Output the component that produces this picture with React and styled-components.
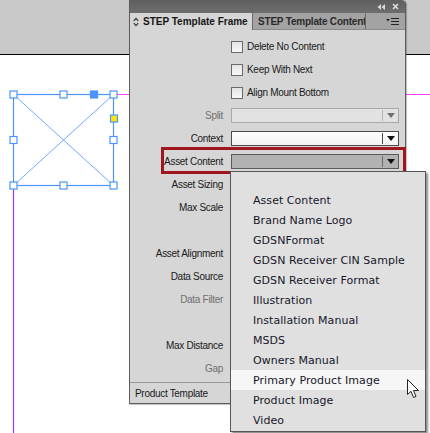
import styled, { createGlobalStyle } from "styled-components";

const GlobalStyle = createGlobalStyle`
  html, body {
    margin: 0;
    padding: 0;
    overflow: hidden;
  }
  #root {
    width: 430px;
    height: 433px;
  }
`;

const Screen = styled.div`
  position: relative;
  width: 430px;
  height: 433px;
  overflow: hidden;
  font-family: "Liberation Sans", Arial, sans-serif;
`;

const Canvas = styled.div`
  display: flex;
  flex-direction: column;
  width: 100%;
  height: 100%;
`;

const Pasteboard = styled.div`
  height: 54px;
  background: #c8c8c8;
  border-bottom: 1px solid #000;
`;

const Page = styled.div`
  flex: 1;
  background: #fff;
`;

const Guides = styled.svg`
  position: absolute;
  left: 0;
  top: 0;
`;

const Panel = styled.div`
  position: absolute;
  left: 129px;
  top: 0;
  width: 277px;
  height: 404px;
  box-sizing: border-box;
  border: 1px solid #5c5c5c;
  border-top: none;
  border-top-right-radius: 4px;
  background: #d6d6d6;
  display: flex;
  flex-direction: column;
  box-shadow: 1px 1px 1px rgba(0, 0, 0, 0.25);
`;

const Header = styled.div`
  height: 13px;
  background: linear-gradient(#5e5e5e, #6e6e6e);
  border-top-right-radius: 4px;
  display: flex;
  justify-content: flex-end;
  align-items: center;
  gap: 7px;
  padding-right: 6px;
`;

const Tabs = styled.div`
  height: 17px;
  display: flex;
  background: #a3a3a3;
  border-bottom: 1px solid #8a8a8a;
  box-sizing: border-box;
`;

const Tab = styled.div`
  width: ${(p) => p.$w}px;
  flex-shrink: 0;
  box-sizing: border-box;
  display: flex;
  align-items: center;
  gap: 4px;
  padding-left: ${(p) => (p.$active ? 3 : 5)}px;
  background: ${(p) => (p.$active ? "#d6d6d6" : "#a3a3a3")};
  border-right: 1px solid #6a6a6a;
  margin-bottom: ${(p) => (p.$active ? "-1px" : "0")};
  font-size: 10px;
  font-weight: bold;
  color: ${(p) => (p.$active ? "#151515" : "#2a2a2a")};
  white-space: nowrap;
  overflow: hidden;
  letter-spacing: ${(p) => (p.$active ? "0" : "-0.2px")};
  svg {
    flex-shrink: 0;
  }
`;

const TabMenu = styled.div`
  flex: 1;
  display: flex;
  justify-content: flex-end;
  align-items: center;
  padding-right: 6px;
`;

const Body = styled.div`
  flex: 1;
  padding-top: 5px;
  display: flex;
  flex-direction: column;
`;

const Row = styled.div`
  position: relative;
  height: 23px;
  display: grid;
  grid-template-columns: 93px 168px;
  column-gap: 8px;
  align-items: center;
  ${(p) =>
    p.$marked &&
    `
    &::after {
      content: "";
      position: absolute;
      left: 31px;
      right: -1px;
      top: -3px;
      height: 27px;
      box-sizing: border-box;
      border: 3px solid #a0161f;
    }
  `}
`;

const Label = styled.div`
  text-align: right;
  font-size: 10px;
  letter-spacing: -0.3px;
  color: ${(p) => (p.$dim ? "#6f6f6f" : "#1a1a1a")};
  white-space: nowrap;
`;

const CheckRow = styled.label`
  display: flex;
  align-items: center;
  gap: 4px;
  font-size: 10px;
  letter-spacing: -0.3px;
  color: #1a1a1a;
`;

const Box = styled.span`
  width: 12px;
  height: 12px;
  box-sizing: border-box;
  border: 1px solid #6a6a6a;
  background: linear-gradient(#e4e4e4, #f8f8f8);
`;

const selectLook = {
  disabled: { bg: "#e2e2e2", border: "#a8a8a8", arrow: "#707070", sep: "#b4b4b4" },
  normal: { bg: "linear-gradient(#ffffff, #f2f2f2)", border: "#4a4a4a", arrow: "#111", sep: "#4a4a4a" },
  active: { bg: "#b2b2b2", border: "#5a5a5a", arrow: "#111", sep: "#6a6a6a" },
};

const Select = styled.div`
  height: 15px;
  box-sizing: border-box;
  border: 1px solid ${(p) => selectLook[p.$look].border};
  background: ${(p) => selectLook[p.$look].bg};
  display: flex;
  justify-content: flex-end;
`;

const Arrow = styled.div`
  width: 15px;
  border-left: 1px solid ${(p) => selectLook[p.$look].sep};
  display: flex;
  align-items: center;
  justify-content: center;
  margin: 1px 0;
  &::before {
    content: "";
    border-left: 4px solid transparent;
    border-right: 4px solid transparent;
    border-top: 5px solid ${(p) => selectLook[p.$look].arrow};
  }
`;

const Footer = styled.div`
  height: 21px;
  box-sizing: border-box;
  margin-top: 2px;
  border-top: 1px solid #9a9a9a;
  display: flex;
  align-items: center;
  padding-left: 5px;
  font-size: 10px;
  letter-spacing: -0.3px;
  color: #1a1a1a;
`;

const Menu = styled.ul`
  position: absolute;
  left: 230px;
  top: 171px;
  width: 196px;
  height: 261px;
  box-sizing: border-box;
  margin: 0;
  padding: 18px 0 0;
  list-style: none;
  background: #e0e0e0;
  border: 1px solid #555;
  box-shadow: 2px 2px 2px rgba(0, 0, 0, 0.45);
`;

const Item = styled.li`
  height: 20px;
  display: flex;
  align-items: center;
  padding-left: 22px;
  font-family: "DejaVu Sans", Verdana, sans-serif;
  font-size: 11px;
  letter-spacing: 0.05px;
  color: #17172a;
  background: ${(p) => (p.$hover ? "#f6f6f6" : "transparent")};
`;

const Cursor = styled.svg`
  position: absolute;
  left: 407px;
  top: 379px;
`;

const Handle = ({ x, y, fill = "#fff", stroke = "#4d94ff" }) => (
  <rect x={x - 3.5} y={y - 3.5} width="7" height="7" fill={fill} stroke={stroke} strokeWidth="1.2" />
);

const rows = [
  { check: "Delete No Content" },
  { check: "Keep With Next" },
  { check: "Align Mount Bottom" },
  { label: "Split", dim: true, select: "disabled" },
  { label: "Context", select: "normal" },
  { label: "Asset Content", select: "active", marked: true },
  { label: "Asset Sizing" },
  { label: "Max Scale" },
  { label: "" },
  { label: "Asset Alignment" },
  { label: "Data Source" },
  { label: "Data Filter", dim: true },
  { label: "" },
  { label: "Max Distance" },
  { label: "Gap", dim: true },
];

const items = [
  "Asset Content",
  "Brand Name Logo",
  "GDSNFormat",
  "GDSN Receiver CIN Sample",
  "GDSN Receiver Format",
  "Illustration",
  "Installation Manual",
  "MSDS",
  "Owners Manual",
  "Primary Product Image",
  "Product Image",
  "Video",
];

export default function App() {
  return (
    <Screen>
      <GlobalStyle />
      <Canvas>
        <Pasteboard />
        <Page />
      </Canvas>
      <Guides width="430" height="433">
        <line x1="116" y1="94.5" x2="430" y2="94.5" stroke="#ff40ff" strokeWidth="1" />
        <line x1="13.5" y1="188" x2="13.5" y2="433" stroke="#9a3ee6" strokeWidth="1.2" />
        <rect x="13.5" y="94.5" width="100" height="91" fill="none" stroke="#4d94ff" strokeWidth="1.2" />
        <line x1="13.5" y1="94.5" x2="113.5" y2="185.5" stroke="#4d94ff" strokeWidth="0.8" />
        <line x1="113.5" y1="94.5" x2="13.5" y2="185.5" stroke="#4d94ff" strokeWidth="0.8" />
        <Handle x={13.5} y={94.5} />
        <Handle x={63.5} y={94.5} />
        <Handle x={113.5} y={94.5} />
        <Handle x={94} y={94.5} fill="#4d94ff" />
        <Handle x={13.5} y={140} />
        <Handle x={113.5} y={140} />
        <Handle x={13.5} y={185.5} />
        <Handle x={63.5} y={185.5} />
        <Handle x={113.5} y={185.5} />
        <Handle x={114} y={118.5} fill="#ffe600" />
      </Guides>

      <Panel>
        <Header>
          <svg width="8" height="6" viewBox="0 0 8 6">
            <path d="M4 0 L0.5 3 L4 6 Z M8 0 L4.5 3 L8 6 Z" fill="#d8d8d8" />
          </svg>
          <svg width="7" height="7" viewBox="0 0 7 7">
            <path d="M1 1 L6 6 M6 1 L1 6" stroke="#dedede" strokeWidth="1.6" />
          </svg>
        </Header>
        <Tabs>
          <Tab $active $w={123}>
            <svg width="6" height="10" viewBox="0 0 6 10">
              <path d="M0.8 3.8 L3 1.4 L5.2 3.8 M0.8 6.2 L3 8.6 L5.2 6.2" fill="none" stroke="#333" strokeWidth="1.2" />
            </svg>
            STEP Template Frame
          </Tab>
          <Tab $w={113}>STEP Template Content</Tab>
          <TabMenu>
            <svg width="13" height="9" viewBox="0 0 13 9">
              <path d="M0 2 L4 2 L2 4.5 Z" fill="#222" />
              <path d="M5 1.5 H13 M5 4.5 H13 M5 7.5 H13" stroke="#222" strokeWidth="1.2" />
            </svg>
          </TabMenu>
        </Tabs>
        <Body>
          {rows.map((r, i) =>
            r.check ? (
              <Row key={i}>
                <span />
                <CheckRow>
                  <Box />
                  {r.check}
                </CheckRow>
              </Row>
            ) : (
              <Row key={i} $marked={r.marked}>
                <Label $dim={r.dim}>{r.label}</Label>
                {r.select ? (
                  <Select $look={r.select}>
                    <Arrow $look={r.select} />
                  </Select>
                ) : (
                  <span />
                )}
              </Row>
            )
          )}
        </Body>
        <Footer>Product Template</Footer>
      </Panel>

      <Menu>
        {items.map((t) => (
          <Item key={t} $hover={t === "Primary Product Image"}>
            {t}
          </Item>
        ))}
      </Menu>

      <Cursor width="13" height="20" viewBox="0 0 13 20">
        <path d="M0.5 0.5 L0.5 15.5 L4 12.3 L6.5 18.5 L9 17.5 L6.5 11.5 L11.5 11.5 Z" fill="#fff" stroke="#222" strokeWidth="1" strokeLinejoin="round" />
      </Cursor>
    </Screen>
  );
}
